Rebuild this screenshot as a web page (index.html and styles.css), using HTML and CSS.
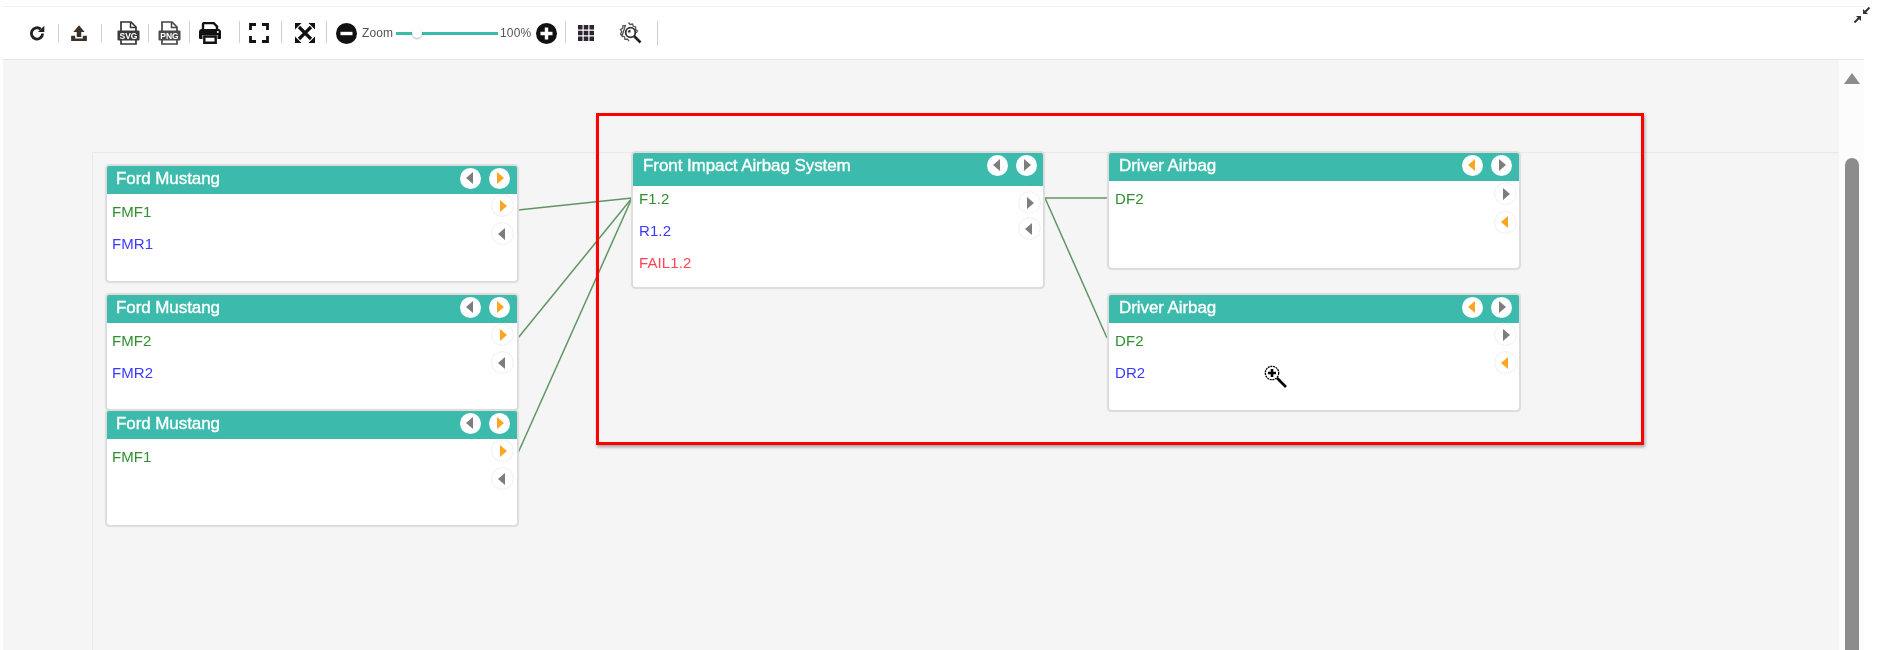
FILE: index.html
```html
<!DOCTYPE html>
<html lang="en">
<head>
<meta charset="utf-8">
<title>Diagram</title>
<link rel="stylesheet" href="styles.css">
</head>
<body>
<div class="stage">
  <header class="toolbar">
    <div class="tool t-refresh"><svg class="ico i18" viewBox="0 0 16 16"><path d="M13 8.500a5 5 0 1 1-1.700-3.900" fill="none" stroke="#222" stroke-width="2.500"/><path d="M14.500 1.500v5.600H8.900z" fill="#222"/></svg></div>
    <span class="sep"></span>
    <div class="tool t-upload"><svg class="ico i18" viewBox="0 0 16 16"><path d="M8 1l5 6h-3v4.500H6V7H3z" fill="#3a3226"/><path d="M1 10.500h3.600v2.300h6.800v-2.300H15V15H1z" fill="#3a3226"/></svg></div>
    <span class="sep"></span>
    <div class="tool t-svg"><svg class="ico i26" viewBox="0 0 26 26"><path d="M6 13V2h10l5 5v6M6 19v5h15v-5" fill="none" stroke="#333" stroke-width="1.700"/><path d="M15.500 2v5.500H21" fill="none" stroke="#333" stroke-width="1.500"/><rect x="2.500" y="10.500" width="22" height="10" rx="1" fill="#3a3a3a"/><text class="ftext" x="13.500" y="18.500">SVG</text></svg></div>
    <span class="sep"></span>
    <div class="tool"><svg class="ico i26" viewBox="0 0 26 26"><path d="M6 13V2h10l5 5v6M6 19v5h15v-5" fill="none" stroke="#444" stroke-width="1.700"/><path d="M15.500 2v5.500H21" fill="none" stroke="#444" stroke-width="1.500"/><rect x="2.500" y="10.500" width="22" height="10" rx="1" fill="#4a4a4a"/><text class="ftext" x="13.500" y="18.500">PNG</text></svg></div>
    <span class="sep sep-tall"></span>
    <div class="tool t-print"><svg class="ico i22" viewBox="0 0 22 22"><path d="M4 8V2.500A1.500 1.500 0 0 1 5.500 1h9L18 4.500V8" fill="none" stroke="#111" stroke-width="2.400"/><path d="M3 7h16a3 3 0 0 1 3 3v6a1 1 0 0 1-1 1h-2.500v-4h-15v4H1a1 1 0 0 1-1-1v-6a3 3 0 0 1 3-3z" fill="#111"/><path d="M5.300 14.500h11.400v6.300H5.300z" fill="none" stroke="#111" stroke-width="2.400"/><circle cx="18.800" cy="10" r="1" fill="#fff"/></svg></div>
    <span class="sep sep-tall"></span>
    <div class="tool t-full"><svg class="ico i20" viewBox="0 0 20 20"><path d="M1.500 7V1.500H7M13 1.500h5.500V7M18.500 13v5.500H13M7 18.500H1.500V13" fill="none" stroke="#111" stroke-width="2.800"/></svg></div>
    <span class="sep sep-tall"></span>
    <div class="tool t-expand"><svg class="ico i20" viewBox="0 0 20 20"><path d="M4 4l12 12M16 4L4 16" stroke="#111" stroke-width="3.200"/><path d="M0 0h6.500L0 6.500zM20 0v6.500L13.500 0zM20 20h-6.500L20 13.500zM0 20v-6.500L6.500 20z" fill="#111"/></svg></div>
    <span class="sep sep-tall"></span>
    <div class="tool zoom">
      <span class="round-ico"><svg class="ico i21" viewBox="0 0 21 21"><circle cx="10.500" cy="10.500" r="10.500" fill="#111"/><rect x="4.500" y="8.800" width="12" height="3.400" fill="#fff"/></svg></span>
      <span class="zoom-label">Zoom</span>
      <div class="slider"><span class="thumb"></span></div>
      <span class="zoom-label pct">100%</span>
      <span class="round-ico"><svg class="ico i21" viewBox="0 0 21 21"><circle cx="10.500" cy="10.500" r="10.500" fill="#111"/><path d="M8.800 4.500h3.400v4.300h4.300v3.400h-4.300v4.300H8.800v-4.300H4.500V8.800h4.300z" fill="#fff"/></svg></span>
    </div>
    <span class="sep sep-tall"></span>
    <div class="tool t-grid"><svg class="ico i16" viewBox="0 0 16 16"><path d="M0 0h4.500v4.500H0zM5.700 0h4.600v4.500H5.700zM11.500 0H16v4.500h-4.500zM0 5.700h4.500v4.600H0zM5.700 5.700h4.600v4.600H5.700zM11.500 5.700H16v4.600h-4.500zM0 11.500h4.500V16H0zM5.700 11.500h4.600V16H5.700zM11.500 11.500H16V16h-4.500z" fill="#2a2433"/></svg></div>
    <div class="tool"><svg class="ico i24" viewBox="0 0 24 24"><path d="M9.500 1.500l1.500 2 2.500-.5.800 2.300 2.400.7-.2 2.500 2 1.500-1.300 2M3 15l-1.500-2 1.300-2.200L1.500 8.500l2.200-1.200.2-2.500 2.500-.2z" fill="none" stroke="#555" stroke-width="1.300"/><path d="M3 15l2.400.8.600 2.500 2.500-.2 1.500 1.900" fill="none" stroke="#555" stroke-width="1.300"/><circle cx="11.500" cy="11.500" r="4.800" fill="none" stroke="#333" stroke-width="1.800"/><path d="M11.500 8.800a2.700 2.700 0 0 0-2.700 2.700h2.700z" fill="#333"/><path d="M15 15l6.500 6.500" stroke="#222" stroke-width="2.600"/></svg></div>
    <span class="sep sep-last"></span>
  </header>

  <main class="canvas">
    <div class="pane"></div>
    <aside class="scrollbar">
      <span class="scroll-up"></span>
      <span class="scroll-thumb"></span>
    </aside>
  </main>

  <svg class="collapse" viewBox="0 0 16 16"><path d="M15.500.5l-5 5" stroke="#333" stroke-width="2"/><path d="M9 2v5h5z" fill="#333"/><path d="M.5 15.500l5-5" stroke="#333" stroke-width="2"/><path d="M2 9h5v5z" fill="#333"/></svg>

  <svg class="wires" viewBox="0 0 1882 650">
    <path class="wire" d="M518 210L632 198"/>
    <path class="wire" d="M518 338L632 198"/>
    <path class="wire" d="M518 453L632 198"/>
    <path class="wire" d="M1045 198H1107"/>
    <path class="wire" d="M1045 198L1107 338"/>
  </svg>

  <section class="node n-ford1 ford">
    <div class="node-head"><h3 class="title">Ford Mustang</h3><div class="btns"><span class="btn l gray"></span><span class="btn r orange"></span></div></div>
    <div class="node-body">
      <ul class="rows"><li class="row g">FMF1</li><li class="row b">FMR1</li></ul>
      <div class="ports"><span class="btn r orange"></span><span class="btn l gray"></span></div>
    </div>
  </section>

  <section class="node n-ford2 ford">
    <div class="node-head"><h3 class="title">Ford Mustang</h3><div class="btns"><span class="btn l gray"></span><span class="btn r orange"></span></div></div>
    <div class="node-body">
      <ul class="rows"><li class="row g">FMF2</li><li class="row b">FMR2</li></ul>
      <div class="ports"><span class="btn r orange"></span><span class="btn l gray"></span></div>
    </div>
  </section>

  <section class="node n-ford3 ford">
    <div class="node-head"><h3 class="title">Ford Mustang</h3><div class="btns"><span class="btn l gray"></span><span class="btn r orange"></span></div></div>
    <div class="node-body">
      <ul class="rows"><li class="row g">FMF1</li></ul>
      <div class="ports"><span class="btn r orange"></span><span class="btn l gray"></span></div>
    </div>
  </section>

  <section class="node n-front">
    <div class="node-head"><h3 class="title">Front Impact Airbag System</h3><div class="btns"><span class="btn l gray"></span><span class="btn r gray"></span></div></div>
    <div class="node-body">
      <ul class="rows"><li class="row g">F1.2</li><li class="row b">R1.2</li><li class="row f">FAIL1.2</li></ul>
      <div class="ports"><span class="btn r gray"></span><span class="btn l gray"></span></div>
    </div>
  </section>

  <section class="node n-driver1 driver">
    <div class="node-head"><h3 class="title">Driver Airbag</h3><div class="btns"><span class="btn l orange"></span><span class="btn r gray"></span></div></div>
    <div class="node-body">
      <ul class="rows"><li class="row g">DF2</li></ul>
      <div class="ports"><span class="btn r gray"></span><span class="btn l orange"></span></div>
    </div>
  </section>

  <section class="node n-driver2 driver">
    <div class="node-head"><h3 class="title">Driver Airbag</h3><div class="btns"><span class="btn l orange"></span><span class="btn r gray"></span></div></div>
    <div class="node-body">
      <ul class="rows"><li class="row g">DF2</li><li class="row b">DR2</li></ul>
      <div class="ports"><span class="btn r gray"></span><span class="btn l orange"></span></div>
    </div>
  </section>

  <div class="highlight"></div>

  <svg class="cursor" viewBox="0 0 24 24"><circle cx="8" cy="8" r="6.700" fill="#fff" stroke="#000" stroke-width="1.300" stroke-dasharray="2 .7"/><path d="M6.700 4h2.600v2.700H12v2.600H9.300V12H6.700V9.300H4V6.700h2.700z" fill="#000"/><path d="M13 13l9 9" stroke="#000" stroke-width="2.600"/></svg>
</div>
</body>
</html>
```

FILE: styles.css
```css
* { box-sizing: border-box; }

html, body {
  margin: 0;
  padding: 0;
  background: #fff;
  overflow: hidden;
}

.stage {
  position: relative;
  display: flex;
  flex-direction: column;
  width: 1882px;
  height: 650px;
  padding: 6px 18px 0 3px;
  overflow: hidden;
  font-family: "Liberation Sans", Arial, sans-serif;
  filter: blur(0.35px);
}

/* toolbar */
.toolbar {
  display: grid;
  grid-template-columns: 34px 1px 42px 1px 46px 1px 40px 1px 49px 1px 41px 1px 44px 1px 238px 1px 42px 46px 3px 1px;
  align-items: center;
  flex: none;
  height: 54px;
  padding: 0 0 0 21px;
  background: #fff;
  border-top: 1px solid #f0f0f0;
  border-bottom: 1px solid #e6e6e6;
}

.tool {
  display: flex;
  align-items: center;
  justify-content: center;
}

.t-refresh { padding-right: 8px; }
.t-upload { padding-right: 2px; }
.t-svg { padding-left: 6px; }
.t-print { padding-right: 9px; }
.t-full { padding-right: 3px; }
.t-expand { padding-left: 2px; }
.t-grid { padding-right: 2px; }

.sep {
  display: block;
  width: 1px;
  height: 18px;
  background: #d0d0d0;
}

.sep-tall { height: 22px; margin-top: -3px; }
.sep-last { grid-column: 20; height: 25px; }

.ico { display: block; }
.i16 { width: 16px; height: 16px; }
.i18 { width: 18px; height: 18px; }
.i20 { width: 20px; height: 20px; }
.i21 { width: 21px; height: 21px; }
.i22 { width: 22px; height: 22px; }
.i24 { width: 24px; height: 24px; }
.i26 { width: 26px; height: 26px; }

.ftext {
  font-family: "Liberation Sans", Arial, sans-serif;
  font-size: 8.5px;
  font-weight: 700;
  fill: #fff;
  text-anchor: middle;
}

.zoom {
  justify-content: flex-start;
  gap: 3px;
  padding-left: 9px;
}

.round-ico { display: block; flex: none; }
.zoom-label { font-size: 12px; color: #555; margin-left: 2px; letter-spacing: .1px; }
.pct { margin-left: -1px; margin-right: 2px; }

.slider {
  position: relative;
  width: 102px;
  height: 3px;
  background: #3cbbac;
}

.thumb {
  position: absolute;
  left: 16px;
  top: -4px;
  width: 10px;
  height: 10px;
  border-radius: 50%;
  background: #fff;
  box-shadow: 0 1px 2px rgba(0, 0, 0, .3);
}

/* canvas */
.canvas {
  display: flex;
  flex: 1;
  min-height: 0;
  background: #f5f5f5;
}

.pane {
  flex: 1;
  margin: 92px 0 0 89px;
  border-top: 1px solid #e9e9e9;
  border-left: 1px solid #e9e9e9;
}

.scrollbar {
  display: flex;
  flex-direction: column;
  align-items: center;
  flex: none;
  width: 25px;
  background: #fcfcfc;
}

.scroll-up {
  width: 0;
  height: 0;
  margin-top: 13px;
  border-left: 8px solid transparent;
  border-right: 8px solid transparent;
  border-bottom: 11px solid #8c8c8c;
}

.scroll-thumb {
  flex: 1;
  width: 14px;
  margin-top: 74px;
  margin-bottom: -10px;
  border-radius: 7px;
  background: #8c8c8c;
}

.collapse {
  position: absolute;
  left: 1854px;
  top: 7px;
  width: 16px;
  height: 16px;
}

.wires {
  position: absolute;
  left: 0;
  top: 0;
  width: 1882px;
  height: 650px;
  pointer-events: none;
}

.wire {
  fill: none;
  stroke: #5f9564;
  stroke-width: 1.5;
}

/* nodes */
.node {
  position: absolute;
  display: flex;
  flex-direction: column;
  width: 410px;
  background: #fff;
  border-radius: 3px;
  box-shadow: 0 0 1px 1.5px #dcdcdc;
}

.n-ford1 { left: 107px; top: 166px; height: 115px; }
.n-ford2 { left: 107px; top: 295px; height: 114px; }
.n-ford3 { left: 107px; top: 411px; height: 114px; }
.n-front { left: 633px; top: 153px; height: 134px; }
.n-driver1 { left: 1109px; top: 153px; height: 115px; }
.n-driver2 { left: 1109px; top: 295px; height: 115px; }

.node-head {
  display: flex;
  justify-content: space-between;
  align-items: flex-start;
  flex: none;
  height: 28px;
  padding: 0 6px 0 10px;
  background: #3cbbac;
  border-radius: 2px 2px 0 0;
}

.ford .node-head { padding: 0 7px 0 9px; }
.driver .node-head { padding: 0 7px 0 10px; }
.n-front .node-head { height: 33px; }

.title {
  margin: 0;
  font-size: 17px;
  font-weight: 400;
  line-height: 26px;
  color: #fff;
  letter-spacing: -.08px;
  -webkit-text-stroke: .35px #fff;
}

.btns {
  display: flex;
  gap: 8px;
  padding-top: 1.5px;
}

.btn {
  display: flex;
  align-items: center;
  justify-content: center;
  flex: none;
  width: 21px;
  height: 21px;
  border-radius: 50%;
  background: #fff;
}

.btn::before {
  content: "";
  width: 0;
  height: 0;
  border-top: 6.5px solid transparent;
  border-bottom: 6.5px solid transparent;
}

.btn.l::before { border-right: 7px solid currentColor; margin-left: -2px; }
.btn.r::before { border-left: 7px solid currentColor; margin-left: 2px; }
.gray { color: #7d7d7d; }
.orange { color: #fba522; }

.node-body {
  display: flex;
  justify-content: space-between;
  align-items: flex-start;
  flex: 1;
  padding: 2px 3px 0 5px;
}

.ford .node-body { padding-right: 4px; }
.n-front .node-body,
.driver .node-body { padding-left: 6px; }

.n-front .rows { margin-top: -5px; }

.rows {
  margin: 0;
  padding: 0;
  list-style: none;
}

.row {
  font-size: 15px;
  line-height: 32px;
  height: 32px;
  letter-spacing: .1px;
}

.row.g { color: #2f8f2f; }
.row.b { color: #3a3aff; }
.row.f { color: #ff4355; }

.ports {
  display: flex;
  flex-direction: column;
  gap: 7px;
  margin-top: -1px;
}

.ports .btn {
  box-shadow: 0 0 2px #d4d4d4;
}

.n-front .ports { margin-top: 4px; gap: 5px; }
.n-driver1 .ports { margin-top: 0; gap: 7.5px; }

.highlight {
  position: absolute;
  left: 596px;
  top: 113px;
  width: 1048px;
  height: 332px;
  border: 3px solid #f00;
  box-shadow: 1px 2px 3px rgba(0, 0, 0, .35);
  pointer-events: none;
}

.cursor {
  position: absolute;
  left: 1264px;
  top: 365px;
  width: 24px;
  height: 24px;
}
```
